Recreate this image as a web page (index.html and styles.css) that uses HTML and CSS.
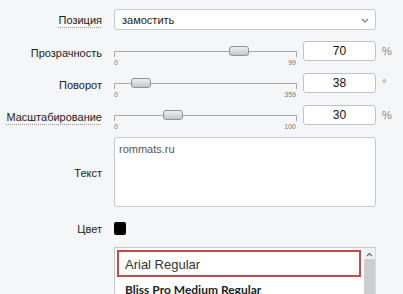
FILE: index.html
```html
<!DOCTYPE html>
<html lang="ru">
<head>
  <meta charset="UTF-8">
  <title>Водяной знак</title>
  <link rel="stylesheet" href="styles.css">
</head>
<body>
  <div class="form">
    <div class="row row-select">
      <span class="label hint">Позиция</span>
      <div class="select">
        <span>замостить</span>
        <svg class="chev" width="8" height="5" viewBox="0 0 8 5"><path d="M1 1l3 3 3-3" fill="none" stroke="#777" stroke-width="1.2"/></svg>
      </div>
    </div>

    <div class="row row-slider">
      <span class="label">Прозрачность</span>
      <div class="slider">
        <div class="track"></div>
        <div class="thumb" style="left: 115px"></div>
        <span class="min">0</span>
        <span class="max">99</span>
      </div>
      <div class="num">70</div>
      <span class="unit">%</span>
    </div>

    <div class="row row-slider">
      <span class="label">Поворот</span>
      <div class="slider">
        <div class="track"></div>
        <div class="thumb" style="left: 17px"></div>
        <span class="min">0</span>
        <span class="max">359</span>
      </div>
      <div class="num">38</div>
      <span class="unit">°</span>
    </div>

    <div class="row row-slider">
      <span class="label hint">Масштабирование</span>
      <div class="slider">
        <div class="track"></div>
        <div class="thumb" style="left: 49px"></div>
        <span class="min">0</span>
        <span class="max">100</span>
      </div>
      <div class="num">30</div>
      <span class="unit">%</span>
    </div>

    <div class="row row-text">
      <span class="label">Текст</span>
      <div class="textarea">rommats.ru</div>
    </div>

    <div class="row row-color">
      <span class="label">Цвет</span>
      <span class="swatch"></span>
    </div>

    <div class="row row-list">
      <span class="label"></span>
      <div class="list">
        <div class="items">
          <div class="item selected">Arial Regular</div>
          <div class="item bold">Bliss Pro Medium Regular</div>
        </div>
        <div class="scrollbar">
          <svg width="7" height="5" viewBox="0 0 7 5"><path d="M1 4l2.5-2.5L6 4" fill="none" stroke="#666" stroke-width="1.2"/></svg>
          <div class="bar"></div>
        </div>
      </div>
    </div>
  </div>
</body>
</html>
```

FILE: styles.css
```css
body { margin: 0; background: #f4f6f8; font-family: "Liberation Sans", Arial, sans-serif; font-size: 11px; color: #222; overflow: hidden; }
.form { padding-top: 9px; }
.row { display: flex; align-items: center; }
.label { width: 102px; flex: none; text-align: right; margin-right: 12px; white-space: nowrap; }
.hint { text-decoration: underline dotted #999; text-underline-offset: 3px; }

.row-select { height: 21px; margin-bottom: 11px; }
.select { width: 262px; height: 21px; box-sizing: border-box; border: 1px solid #c4c8cc; border-radius: 3px; background: #fff; display: flex; align-items: center; justify-content: space-between; padding: 0 6px 0 7px; font-size: 11px; }
.chev { margin-top: 1px; }

.row-slider { height: 20px; margin-bottom: 12px; align-items: flex-start; }
.row-slider .label { line-height: 20px; margin-top: 2px; }
.slider { position: relative; width: 183px; height: 20px; flex: none; }
.track { position: absolute; left: 0; right: 0; top: 10px; height: 5px; border-top: 1px solid #aaa; border-left: 1px solid #aaa; border-right: 1px solid #aaa; }
.thumb { position: absolute; top: 5px; width: 20px; height: 10px; box-sizing: border-box; border: 1px solid #8e9399; border-radius: 3px; background: linear-gradient(#eef0f2, #c3c7cb); }
.min, .max { position: absolute; top: 18px; font-size: 7px; color: #777; }
.min { left: 0; }
.max { right: 1px; }
.num { width: 73px; height: 20px; margin-left: 6px; box-sizing: border-box; border: 1px solid #bfc3c7; border-radius: 3px; background: #fff; text-align: center; line-height: 18px; font-size: 12px; color: #111; flex: none; }
.unit { margin-left: 6px; color: #888; font-size: 11px; line-height: 20px; }

.row-text { margin-top: 0; margin-bottom: 15px; }
.row-text .label { margin-top: 2px; }
.textarea { width: 262px; height: 70px; box-sizing: border-box; border: 1px solid #c4c8cc; border-radius: 3px; background: #fff; padding: 5px 4px; color: #555; font-size: 11px; }

.row-color { height: 13px; margin-bottom: 12px; }
.swatch { width: 12px; height: 13px; background: #000; border-radius: 2px; }

.row-list { align-items: flex-start; }
.list { width: 262px; height: 60px; box-sizing: border-box; border: 1px solid #c4c8cc; border-right: 1px solid #d8dbde; background: #fff; display: flex; padding: 2px 0 0 2px; }
.items { flex: 1; }
.item { height: 27px; box-sizing: border-box; padding-left: 8px; line-height: 25px; font-size: 13px; color: #333; }
.item.selected { border: 2px solid #c44a4f; padding-left: 6px; }
.item.bold { font-family: Lato, "Liberation Sans", sans-serif; font-weight: bold; font-size: 12px; color: #222; line-height: 25px; }
.scrollbar { width: 11px; margin-left: 3px; margin-top: -2px; background: #f1f1f1; display: flex; flex-direction: column; align-items: center; }
.scrollbar svg { margin: 4px 0 2px; }
.bar { width: 11px; height: 36px; background: #cdcdcd; }
```
